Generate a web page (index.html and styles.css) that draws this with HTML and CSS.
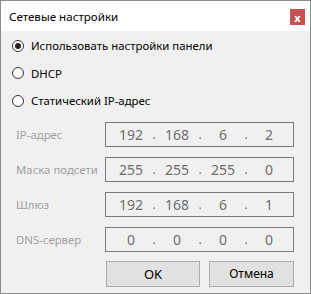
FILE: index.html
```html
<!DOCTYPE html>
<html lang="ru">
<head>
<meta charset="utf-8">
<link rel="stylesheet" href="styles.css">
</head>
<body>
<div class="window">
  <div class="titlebar">
    <span class="title">Сетевые настройки</span>
    <span class="close">x</span>
  </div>
  <div class="content">
    <div class="radios">
      <label class="radio"><span class="dot checked"></span><span>Использовать настройки панели</span></label>
      <label class="radio"><span class="dot"></span><span>DHCP</span></label>
      <label class="radio"><span class="dot"></span><span>Статический IP-адрес</span></label>
    </div>
    <div class="fields">
      <div class="field"><span class="label">IP-адрес</span>
        <div class="ip"><span>192</span><i>.</i><span>168</span><i>.</i><span>6</span><i>.</i><span>2</span></div></div>
      <div class="field"><span class="label">Маска подсети</span>
        <div class="ip"><span>255</span><i>.</i><span>255</span><i>.</i><span>255</span><i>.</i><span>0</span></div></div>
      <div class="field"><span class="label">Шлюз</span>
        <div class="ip"><span>192</span><i>.</i><span>168</span><i>.</i><span>6</span><i>.</i><span>1</span></div></div>
      <div class="field"><span class="label">DNS-сервер</span>
        <div class="ip"><span>0</span><i>.</i><span>0</span><i>.</i><span>0</span><i>.</i><span>0</span></div></div>
    </div>
    <div class="buttons">
      <button class="btn ok">OK</button>
      <button class="btn cancel">Отмена</button>
    </div>
  </div>
</div>
</body>
</html>
```
FILE: styles.css
```css
html, body { margin: 0; padding: 0; background: #f0f0f0; }
body { font-family: "Noto Sans", "Open Sans", sans-serif; font-size: 11.4px; color: #000; }
.window {
  width: 311px; height: 294px; box-sizing: border-box;
  border: 1px solid #8c8c8c; background: #f0f0f0;
  display: flex; flex-direction: column;
}
.titlebar {
  height: 30px; background: #fff; display: flex; align-items: center;
  padding-left: 8px; flex: none;
}
.title { font-size: 11.6px; flex: 1; }
.close {
  align-self: flex-start; margin-top: 8px; margin-right: 5px;
  width: 15px; height: 16px; background: #c75050; color: #fff;
  font-size: 11px; font-weight: bold; display: flex; align-items: center; justify-content: center;
  line-height: 1;
}
.content { padding: 0 0 0 11px; display: flex; flex-direction: column; }
.radios { display: flex; flex-direction: column; padding-top: 1px; }
.radio { height: 27.5px; display: flex; align-items: center; gap: 7px; }
.dot {
  width: 12px; height: 12px; box-sizing: border-box; border: 1px solid #333;
  border-radius: 50%; display: flex; align-items: center; justify-content: center; background: #fff;
}
.dot.checked::after { content: ""; width: 6px; height: 6px; border-radius: 50%; background: #222; }
.fields { display: flex; flex-direction: column; gap: 10px; margin-top: 7px; }
.field { display: flex; align-items: center; height: 25px; }
.label { width: 89px; padding-left: 4px; color: #a0a0a0; white-space: nowrap; }
.ip {
  width: 189px; height: 25px; box-sizing: border-box; border: 1px solid #7a7a7a;
  display: grid; grid-template-columns: 46px 0 46px 0 46px 0 46px; padding-left: 2px;
  align-items: center; color: #6d6d6d; font-size: 14px;
}
.ip span { text-align: center; }
.ip i { font-style: normal; display: flex; justify-content: center; width: 0; overflow: visible; font-size: 12px; }
.buttons { display: flex; gap: 9px; margin-top: 9px; padding-left: 94px; }
.btn {
  height: 26px; box-sizing: border-box; border: 1px solid #adadad; background: #e1e1e1;
  font-family: inherit; font-size: 12px; color: #000; padding: 0;
}
.ok { width: 94px; font-size: 13px; }
.cancel { width: 85px; }
```
